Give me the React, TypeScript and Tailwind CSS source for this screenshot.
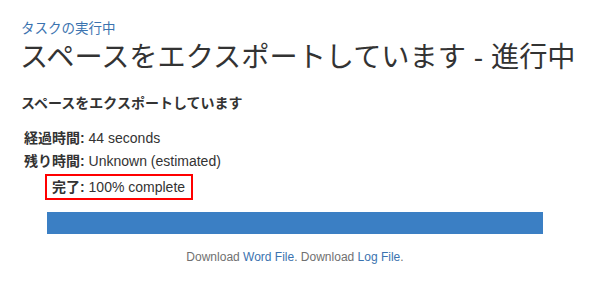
export default function App() {
	return (
		<div
			className="w-[600px] h-[285px] bg-white text-[#333333] pl-[21px] pt-[19px]"
			style={{ fontFamily: '"Liberation Sans", "Noto Sans CJK JP", sans-serif' }}
		>
			<div className="text-[13.5px] leading-[20px] text-[#3b73af]">タスクの実行中</div>
			<h1 className="text-[28.2px] leading-[36px] font-normal text-[#333333] -ml-[1px]">
				スペースをエクスポートしています - 進行中
			</h1>
			<h2 className="mt-[18px] text-[14px] leading-[20px] font-bold">スペースをエクスポートしています</h2>
			<div className="mt-[14px] pl-[3px] text-[14px] leading-[23px]">
				<div>
					<b>経過時間:</b> 44 seconds
				</div>
				<div>
					<b>残り時間:</b> Unknown (estimated)
				</div>
			</div>
			<div className="ml-[24px] mt-[1px] w-[148px] border-2 border-[#ff0000] pl-[5px] text-[14px] leading-[22px]">
				<b>完了:</b> 100% complete
			</div>
			<div className="ml-[26px] mt-[12px] w-[496px]">
				<div className="h-[22px] bg-[#3b7fc4]" />
				<div className="mt-[15px] text-center text-[12px] leading-[16px] text-[#707070]">
					Download <span className="text-[#3b73af]">Word File</span>. Download{" "}
					<span className="text-[#3b73af]">Log File</span>.
				</div>
			</div>
		</div>
	)
}
